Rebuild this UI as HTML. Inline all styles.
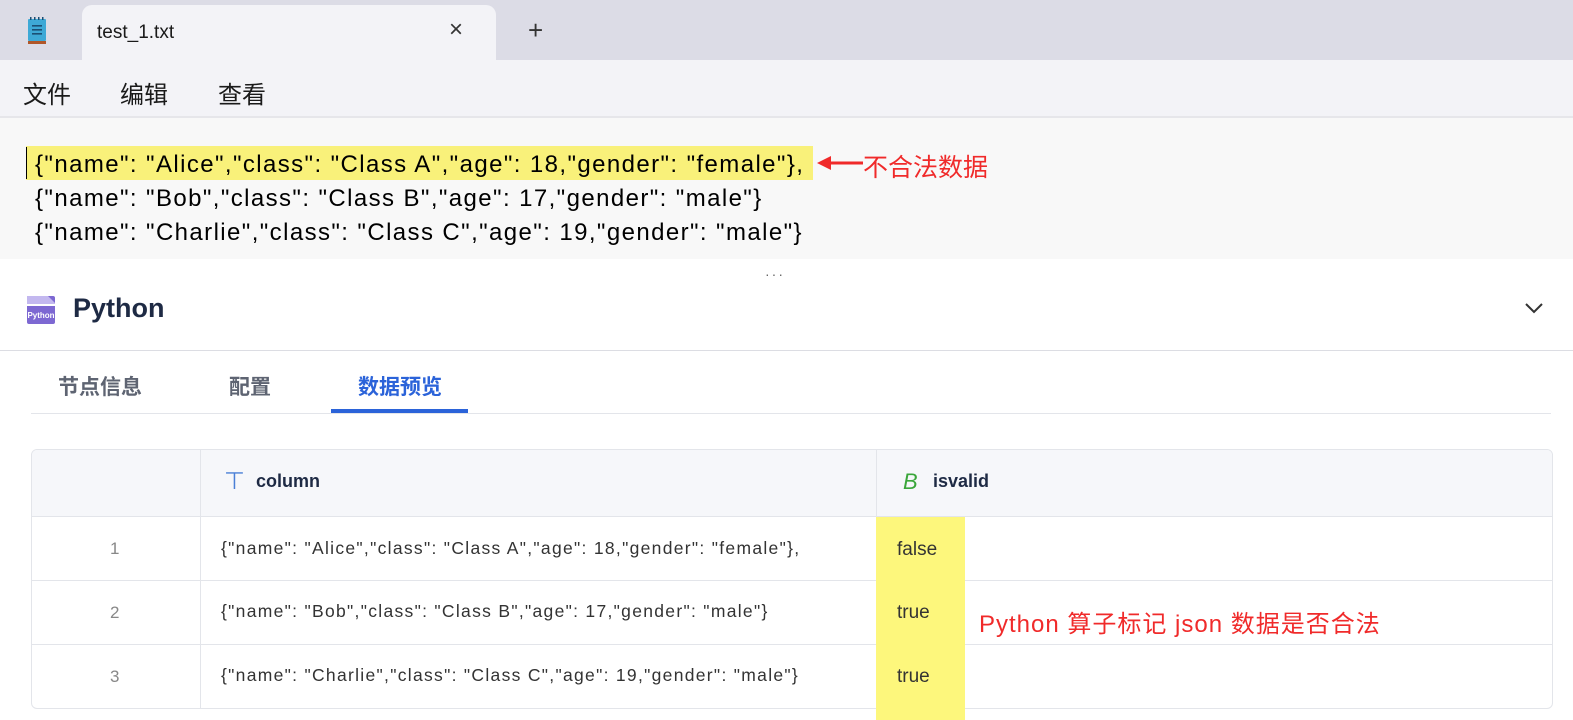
<!DOCTYPE html>
<html><head><meta charset="utf-8"><style>
*{margin:0;padding:0;box-sizing:border-box}
body{width:1573px;height:720px;overflow:hidden;background:#fff;font-family:"Liberation Sans","Noto Sans CJK SC",sans-serif;position:relative}
.abs{position:absolute}
</style></head><body>
<div class="abs" style="left:0;top:0;width:1573px;height:60px;background:#dcdce6"></div>
<div class="abs" style="left:82px;top:5px;width:414px;height:56px;background:#f3f3f7;border-radius:10px 10px 0 0"></div>
<svg class="abs" style="left:26px;top:16px" width="24" height="30" viewBox="0 0 24 30"><rect x="2" y="3" width="18" height="22" rx="1" fill="#3ea9d6"/><rect x="2" y="25" width="18" height="3" fill="#b0572a"/><g fill="#1b4f74"><rect x="6" y="9" width="10" height="1.6"/><rect x="6" y="13" width="10" height="1.6"/><rect x="6" y="17" width="10" height="1.6"/></g><g fill="#1b4f74"><rect x="4" y="1" width="1.5" height="3"/><rect x="8" y="1" width="1.5" height="3"/><rect x="12" y="1" width="1.5" height="3"/><rect x="16" y="1" width="1.5" height="3"/></g></svg>
<div class="abs" style="left:97px;top:22px;font-size:19px;color:#1a1a1a">test_1.txt</div>
<div class="abs" style="left:449px;top:16px;font-size:24px;color:#333;font-weight:300">×</div>
<div class="abs" style="left:528px;top:15px;font-size:26px;color:#333;font-weight:300">+</div>
<div class="abs" style="left:0;top:60px;width:1573px;height:56px;background:#f3f3f7"></div>
<div class="abs" style="left:23px;top:75px;font-size:24px;color:#1a1a1a">文件</div>
<div class="abs" style="left:120px;top:75px;font-size:24px;color:#1a1a1a">编辑</div>
<div class="abs" style="left:218px;top:75px;font-size:24px;color:#1a1a1a">查看</div>
<div class="abs" style="left:0;top:116px;width:1573px;height:2px;background:#e6e6ea"></div>
<div class="abs" style="left:0;top:118px;width:1573px;height:141px;background:#f8f8f8"></div>
<div class="abs" style="left:26px;top:146px;width:787px;height:34px;background:#f9f17a"></div>
<div class="abs" style="left:26px;top:147px;width:1px;height:32px;background:#000"></div>
<div class="abs" style="left:35px;top:148px;font-size:24px;line-height:34px;color:#000;letter-spacing:1.4px;white-space:pre">{"name": "Alice","class": "Class A","age": 18,"gender": "female"},
{"name": "Bob","class": "Class B","age": 17,"gender": "male"}
{"name": "Charlie","class": "Class C","age": 19,"gender": "male"}</div>
<svg class="abs" style="left:815px;top:155px" width="50" height="16"><path d="M48 8H12" stroke="#f02a2a" stroke-width="3"/><path d="M2 8L16 1V15Z" fill="#f02a2a"/></svg>
<div class="abs" style="left:863px;top:148px;font-size:25px;color:#f02a2a">不合法数据</div>
<div class="abs" style="left:765px;top:266px;font-size:14px;color:#666;letter-spacing:2px">···</div>
<svg class="abs" style="left:26px;top:295px" width="30" height="30" viewBox="0 0 30 30"><rect x="1" y="1" width="28" height="28" rx="2" fill="#7d68d2"/><path d="M1 1H22L29 8V10H1Z" fill="#c3b8ef"/><rect x="1" y="9" width="28" height="2" fill="#fff"/><text x="15" y="23" font-size="8" font-weight="bold" fill="#fff" text-anchor="middle" font-family="Liberation Sans">Python</text></svg>
<div class="abs" style="left:73px;top:293px;font-size:27px;font-weight:bold;color:#1e2a44">Python</div>
<svg class="abs" style="left:1524px;top:301px" width="20" height="14"><path d="M2 3L10 11L18 3" stroke="#333" stroke-width="2" fill="none"/></svg>
<div class="abs" style="left:0;top:350px;width:1573px;height:1px;background:#dcdde3"></div>
<div class="abs" style="left:58px;top:371px;font-size:21px;font-weight:bold;color:#5e6472">节点信息</div>
<div class="abs" style="left:229px;top:371px;font-size:21px;font-weight:bold;color:#5e6472">配置</div>
<div class="abs" style="left:358px;top:371px;font-size:21px;font-weight:bold;color:#2b63d9">数据预览</div>
<div class="abs" style="left:31px;top:413px;width:1520px;height:1px;background:#e3e5ea"></div>
<div class="abs" style="left:331px;top:409px;width:137px;height:4px;background:#2b63d9"></div>
<div class="abs" style="left:31px;top:449px;width:1522px;height:260px;border:1px solid #e3e5ea;border-radius:6px;overflow:hidden">
 <div class="abs" style="left:0;top:0;width:1522px;height:67px;background:#f6f7fa;border-bottom:1px solid #e3e5ea"></div>
 <div class="abs" style="left:168px;top:0;width:1px;height:67px;background:#e3e5ea"></div>
 <div class="abs" style="left:844px;top:0;width:1px;height:67px;background:#e3e5ea"></div>
 <div class="abs" style="left:0;top:130px;width:1522px;height:1px;background:#e3e5ea"></div>
 <div class="abs" style="left:0;top:194px;width:1522px;height:1px;background:#e3e5ea"></div>
 <div class="abs" style="left:168px;top:67px;width:1px;height:194px;background:#e3e5ea"></div>
</div>
<div class="abs" style="left:876px;top:517px;width:89px;height:203px;background:#fdf77c"></div>
<div class="abs" style="left:224px;top:467px;font-size:24px;color:#4a7fd6;font-weight:300">⊤</div>
<div class="abs" style="left:256px;top:471px;font-size:18px;font-weight:bold;color:#1e2a44">column</div>
<div class="abs" style="left:903px;top:469px;font-size:22px;color:#3aa63a;font-style:italic">B</div>
<div class="abs" style="left:933px;top:471px;font-size:18px;font-weight:bold;color:#1e2a44">isvalid</div>
<div class="abs" style="left:110px;top:539px;font-size:17px;color:#888">1</div>
<div class="abs" style="left:110px;top:603px;font-size:17px;color:#888">2</div>
<div class="abs" style="left:110px;top:667px;font-size:17px;color:#888">3</div>
<div class="abs" style="left:221px;top:538px;font-size:17.5px;letter-spacing:1.3px;color:#333;white-space:pre">{"name": "Alice","class": "Class A","age": 18,"gender": "female"},</div>
<div class="abs" style="left:221px;top:601px;font-size:17.5px;letter-spacing:1.3px;color:#333;white-space:pre">{"name": "Bob","class": "Class B","age": 17,"gender": "male"}</div>
<div class="abs" style="left:221px;top:665px;font-size:17.5px;letter-spacing:1.3px;color:#333;white-space:pre">{"name": "Charlie","class": "Class C","age": 19,"gender": "male"}</div>
<div class="abs" style="left:897px;top:539px;font-size:19px;color:#333">false</div>
<div class="abs" style="left:897px;top:602px;font-size:19px;color:#333">true</div>
<div class="abs" style="left:897px;top:666px;font-size:19px;color:#333">true</div>
<div class="abs" style="left:979px;top:604px;font-size:24px;letter-spacing:1px;color:#f02a2a">Python 算子标记 json 数据是否合法</div>
</body></html>
